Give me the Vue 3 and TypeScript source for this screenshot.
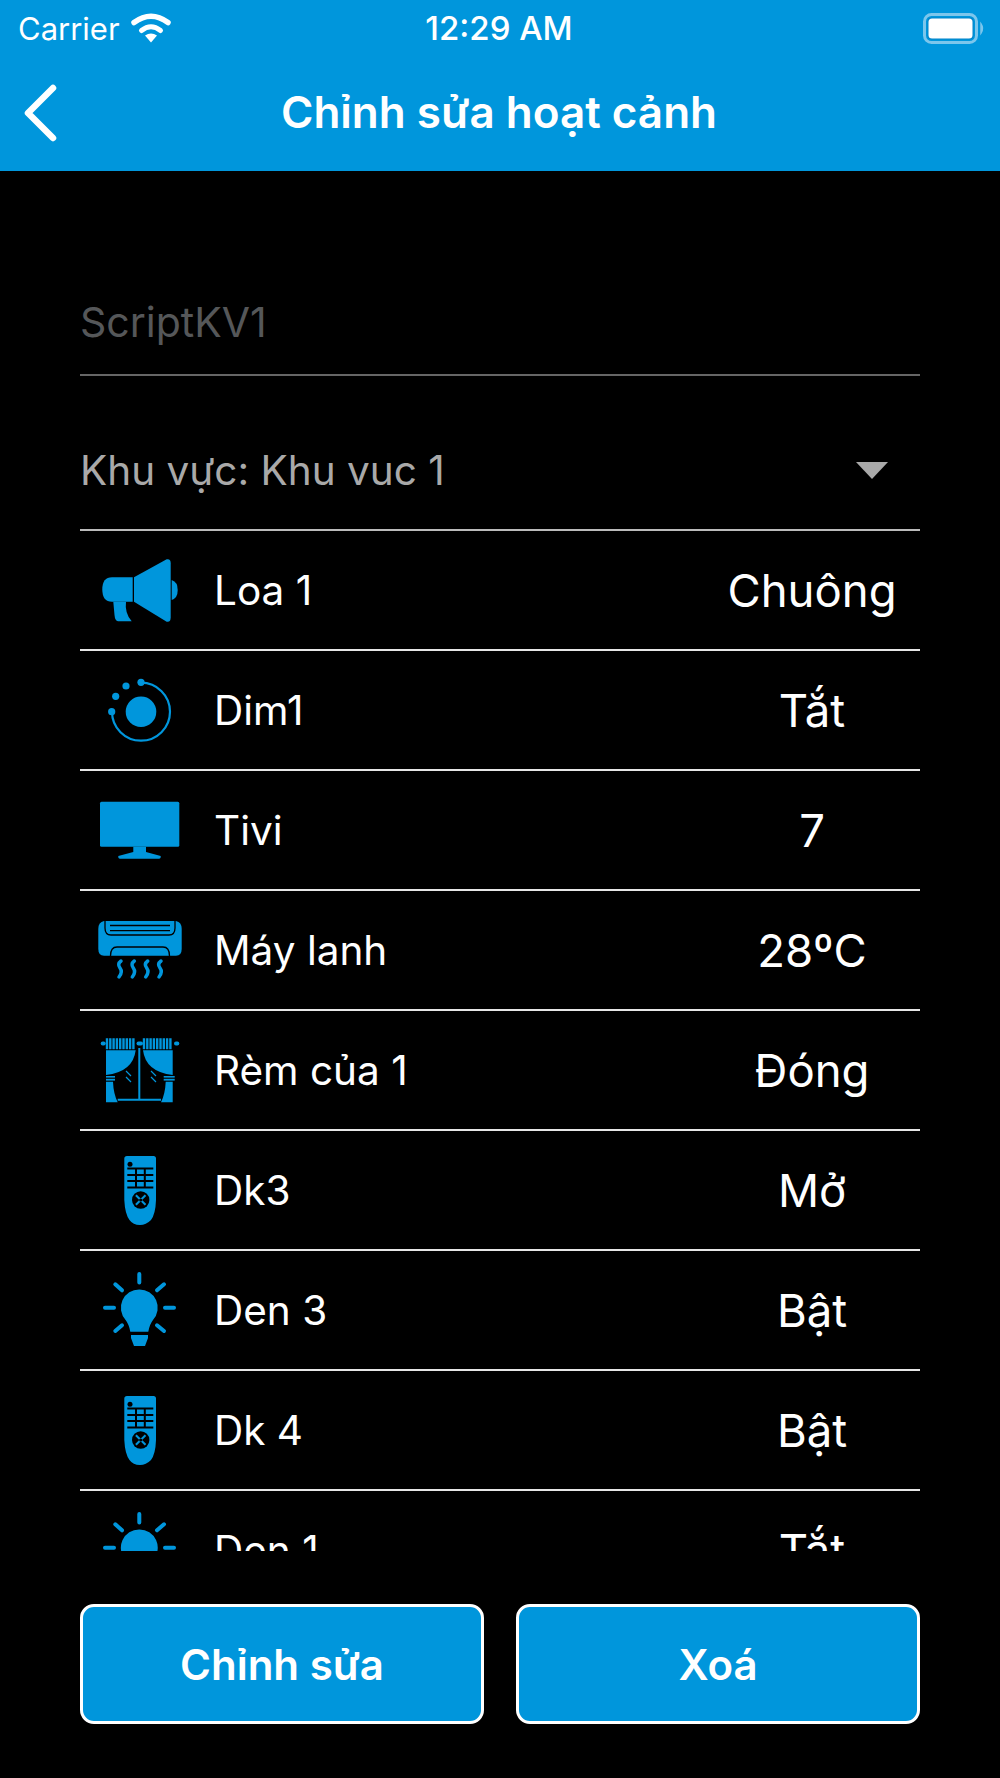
<script setup lang="ts">
interface Row { icon: string; name: string; value: string }
const rows: Row[] = [
  { icon: 'speaker', name: 'Loa 1', value: 'Chuông' },
  { icon: 'dim', name: 'Dim1', value: 'Tắt' },
  { icon: 'tv', name: 'Tivi', value: '7' },
  { icon: 'ac', name: 'Máy lanh', value: '28ºC' },
  { icon: 'curtain', name: 'Rèm của 1', value: 'Đóng' },
  { icon: 'remote', name: 'Dk3', value: 'Mở' },
  { icon: 'bulb', name: 'Den 3', value: 'Bật' },
  { icon: 'remote', name: 'Dk 4', value: 'Bật' },
  { icon: 'bulb', name: 'Den 1', value: 'Tắt' },
]
</script>

<template>
  <div class="page">
    <header class="top">
      <div class="status">
        <div class="status-left">
          <span>Carrier</span>
          <svg class="wifi" viewBox="0 0 40 30" width="40" height="30">
            <path d="M20 29.500 L14 22.500 Q20 18.500 26 22.500 Z" fill="#fff" />
            <path d="M10.500 17.500 Q20 10 29.500 17.500" fill="none" stroke="#fff" stroke-width="5" stroke-linecap="round" />
            <path d="M3 9.500 Q20 -3 37 9.500" fill="none" stroke="#fff" stroke-width="5.500" stroke-linecap="round" />
          </svg>
        </div>
        <span class="time">12:29 AM</span>
        <svg class="battery" viewBox="0 0 64 31" width="64" height="31">
          <rect x="1.500" y="1.500" width="52" height="28" rx="7" fill="none" stroke="#7cc6ec" stroke-width="3" />
          <rect x="4.500" y="4.500" width="46" height="22" rx="4" fill="#0083c8" />
          <rect x="5.500" y="5.500" width="44" height="20" rx="3.500" fill="#fff" />
          <path d="M58 11 Q61 15.500 58 20 Z" fill="#7cc6ec" stroke="#7cc6ec" stroke-width="1.500" />
        </svg>
      </div>
      <div class="nav">
        <svg class="back" viewBox="0 0 36 58" width="36" height="58">
          <path d="M31 4 L6 29 L31 54" fill="none" stroke="#fff" stroke-width="6.500" stroke-linecap="round" stroke-linejoin="round" />
        </svg>
        <h1>Chỉnh sửa hoạt cảnh</h1>
      </div>
    </header>

    <main class="content">
      <div class="field name-field">ScriptKV1</div>
      <div class="field area-field">
        <span>Khu vực: Khu vuc 1</span>
        <span class="caret"></span>
      </div>

      <div class="list">
        <div v-for="row in rows" :key="row.name" class="row">
          <svg class="icon" viewBox="-10 0 100 80" width="100" height="80" fill="#0096dc">
            <template v-if="row.icon === 'speaker'">
              <path d="M12 27.300 H32.700 V51.700 H12 Q2.300 51.700 2.300 39.500 Q2.300 27.300 12 27.300 Z" />
              <path d="M13.300 51.700 H26 Q24.500 63 31.700 71.300 H18 Q15 71 14.500 65 Z" />
              <path d="M34 27.300 L66.700 9.300 Q70.700 8.500 70.700 13.300 V67.300 Q70.700 72.500 66.700 71.700 L34 51.700 Z" />
              <path d="M71.700 30 Q77.700 32 77.700 40 Q77.700 48 71.700 50 Z" />
            </template>
            <template v-else-if="row.icon === 'dim'">
              <circle cx="41" cy="41.700" r="15.300" />
              <path d="M41 12.700 A29 29 0 1 1 12 41.700" fill="none" stroke="#0096dc" stroke-width="2.200" />
              <circle cx="41" cy="12.300" r="3.600" />
              <circle cx="26" cy="16" r="3.600" />
              <circle cx="15.700" cy="26.300" r="3.600" />
              <circle cx="11.700" cy="41.700" r="3.600" />
            </template>
            <template v-else-if="row.icon === 'tv'">
              <rect x="0" y="11.700" width="79.300" height="45" rx="1.500" />
              <path d="M33.300 56.700 H46 V62 L60.700 66 Q61 68.700 59 68.700 H20 Q18 68.700 18.300 66 L33.300 62 Z" />
            </template>
            <template v-else-if="row.icon === 'ac'">
              <path d="M4 11 H76 Q81.700 12 81.700 19 V39 Q81.700 45.700 76 45.700 H4 Q-1.700 45.700 -1.700 39 V19 Q-1.700 12 4 11 Z" />
              <g fill="none" stroke="#000" stroke-width="1.300">
                <path d="M5 10 V18 Q5 25 11 25 H69 Q75 25 75 18 V10" />
                <path d="M10 15.500 H70 M10 20.700 H70" />
                <path d="M10.500 46 Q10.500 37 17 37 H63 Q69.500 37 69.500 46" />
              </g>
              <g fill="none" stroke="#0096dc" stroke-width="3.500" stroke-linecap="round">
                <path d="M21 51 Q17 54 20 58 Q23 62 19 67" />
                <path d="M34.300 51 Q30.300 54 33.300 58 Q36.300 62 32.300 67" />
                <path d="M47.700 51 Q43.700 54 46.700 58 Q49.700 62 45.700 67" />
                <path d="M61 51 Q57 54 60 58 Q63 62 59 67" />
              </g>
            </template>
            <template v-else-if="row.icon === 'curtain'">
              <rect x="0.700" y="11.500" width="5" height="4" rx="2" />
              <rect x="36.500" y="11.500" width="6.500" height="4" rx="2" />
              <rect x="74" y="11.500" width="5.300" height="4" rx="2" />
              <g fill="none" stroke="#0096dc" stroke-width="2.400">
                <path d="M7 8.300 V19.300 M10.300 8.300 V19.300 M13.600 8.300 V19.300 M16.900 8.300 V19.300 M20.200 8.300 V19.300 M23.500 8.300 V19.300 M26.800 8.300 V19.300 M30.100 8.300 V19.300 M33.400 8.300 V19.300" />
                <path d="M44 8.300 V19.300 M47.300 8.300 V19.300 M50.600 8.300 V19.300 M53.900 8.300 V19.300 M57.200 8.300 V19.300 M60.500 8.300 V19.300 M63.800 8.300 V19.300 M67.100 8.300 V19.300 M70.400 8.300 V19.300" />
              </g>
              <path d="M6 20.300 H35.700 Q33 42 6 45 Z" />
              <path d="M72.700 20.300 H43 Q45.700 42 72.700 45 Z" />
              <rect x="6" y="46" width="9" height="1.600" />
              <rect x="6" y="48.800" width="9" height="1.800" />
              <rect x="63.700" y="46" width="11" height="1.600" />
              <rect x="63.700" y="48.800" width="11" height="1.800" />
              <path d="M6 51.800 H13 Q13.500 64 17.700 72.300 H6 Z" />
              <path d="M72.700 51.800 H65.700 Q65.200 64 61 72.300 H72.700 Z" />
              <path d="M39.300 18 V69.500 M17.700 69.800 H61" fill="none" stroke="#0096dc" stroke-width="2" />
              <path d="M26 41 L31 46 M26 47 L31 52 M51 41 L56 46 M51 47 L56 52" fill="none" stroke="#0096dc" stroke-width="1.200" />
            </template>
            <template v-else-if="row.icon === 'remote'">
              <path d="M27 6 H53.500 Q56 6 56 8.500 V50 Q55.500 64 51 70 Q46 75 40 75 Q33 75 29.500 70 Q25 64 24.300 50 V8.500 Q24.300 6 27 6 Z" />
              <circle cx="30" cy="14.300" r="2.500" fill="#000" />
              <path d="M27.300 18.500 H53.300 M27.300 25 H53.300 M27.300 31 H53.300 M27.300 37.500 H53.300 M36 18.500 V37.500 M44.800 18.500 V37.500" fill="none" stroke="#000" stroke-width="2" />
              <circle cx="40.700" cy="50" r="8.700" fill="#000" />
              <path d="M35.900 45.200 L45.500 54.800 M45.500 45.200 L35.900 54.800" fill="none" stroke="#0096dc" stroke-width="2" />
              <circle cx="40.700" cy="50" r="1.600" fill="#000" />
            </template>
            <template v-else-if="row.icon === 'bulb'">
              <path d="M39.300 19.400 A18.300 18.300 0 0 1 53 50 Q49.500 54.500 48.300 61.700 H30.300 Q29.100 54.500 25.600 50 A18.300 18.300 0 0 1 39.300 19.400 Z" />
              <path d="M31 65 H48 V68 L45 76 H34 L31 68 Z" />
              <g fill="none" stroke="#0096dc" stroke-width="4" stroke-linecap="round">
                <path d="M39.300 4 V12.500 M5 37.700 H14 M65 37.700 H74 M15.300 14.300 L22 20.300 M64 14.300 L57 20.300 M15.300 61 L22 55.300 M64 61 L57 55.300" />
              </g>
            </template>
          </svg>
          <span class="name">{{ row.name }}</span>
          <span class="value">{{ row.value }}</span>
        </div>
      </div>

      <div class="actions">
        <button class="btn" type="button">Chỉnh sửa</button>
        <button class="btn" type="button">Xoá</button>
      </div>
    </main>
  </div>
</template>

<style scoped>
.page {
  height: 1778px;
  background: #000;
  color: #fff;
  font-family: Inter, "Liberation Sans", sans-serif;
  overflow: hidden;
}
.top {
  height: 171px;
  background: #0096dc;
  box-sizing: border-box;
}
.status {
  height: 56px;
  display: flex;
  align-items: center;
  justify-content: space-between;
  padding: 0 13px 0 18px;
  font-size: 31px;
  font-weight: 400;
  position: relative;
}
.status-left {
  display: flex;
  align-items: center;
  gap: 11px;
}
.wifi { display: block; }
.time {
  position: absolute;
  left: -2px;
  right: 0;
  text-align: center;
  font-size: 33px;
  font-weight: 500;
  pointer-events: none;
}
.battery { display: block; }
.nav {
  height: 115px;
  display: flex;
  align-items: center;
  justify-content: center;
  position: relative;
}
.back {
  position: absolute;
  left: 22px;
  top: 28px;
}
.nav h1 {
  margin: 0 2px 0 0;
  font-size: 44px;
  font-weight: 600;
  line-height: 1;
  position: relative;
  top: -2px;
}
.content {
  padding: 0 80px;
  display: flex;
  flex-direction: column;
}
.field {
  box-sizing: border-box;
  font-size: 40.5px;
  display: flex;
  align-items: center;
}
.name-field {
  height: 205px;
  padding-top: 98px;
  font-size: 41px;
  color: #555759;
  border-bottom: 2px solid #666;
}
.area-field {
  height: 155px;
  padding-top: 35px;
  color: #a9a9a9;
  justify-content: space-between;
  border-bottom: 2.5px solid #bbb;
}
.caret {
  width: 0;
  height: 0;
  border-left: 16px solid transparent;
  border-right: 16px solid transparent;
  border-top: 17px solid #a9a9a9;
  margin: 1px 32px 0 0;
}
.list {
  height: 1020px;
  overflow: hidden;
}
.row {
  box-sizing: border-box;
  height: 120px;
  display: flex;
  align-items: center;
  border-bottom: 2px solid #e6e6e6;
  padding-left: 10px;
}
.icon {
  flex: none;
  display: block;
  margin-top: -1px;
}
.name {
  margin-left: 24px;
  font-size: 40.5px;
  flex: 1;
}
.value {
  width: 216px;
  text-align: center;
  font-size: 45.5px;
}
.actions {
  display: flex;
  gap: 32px;
  margin-top: 53px;
}
.btn {
  flex: 1;
  height: 120px;
  box-sizing: border-box;
  background: #0096dc;
  border: 3px solid #fff;
  border-radius: 14px;
  color: #fff;
  font-family: inherit;
  font-size: 42px;
  font-weight: 600;
  padding: 0;
}
</style>

<style>
html, body { background: #000; }
</style>
